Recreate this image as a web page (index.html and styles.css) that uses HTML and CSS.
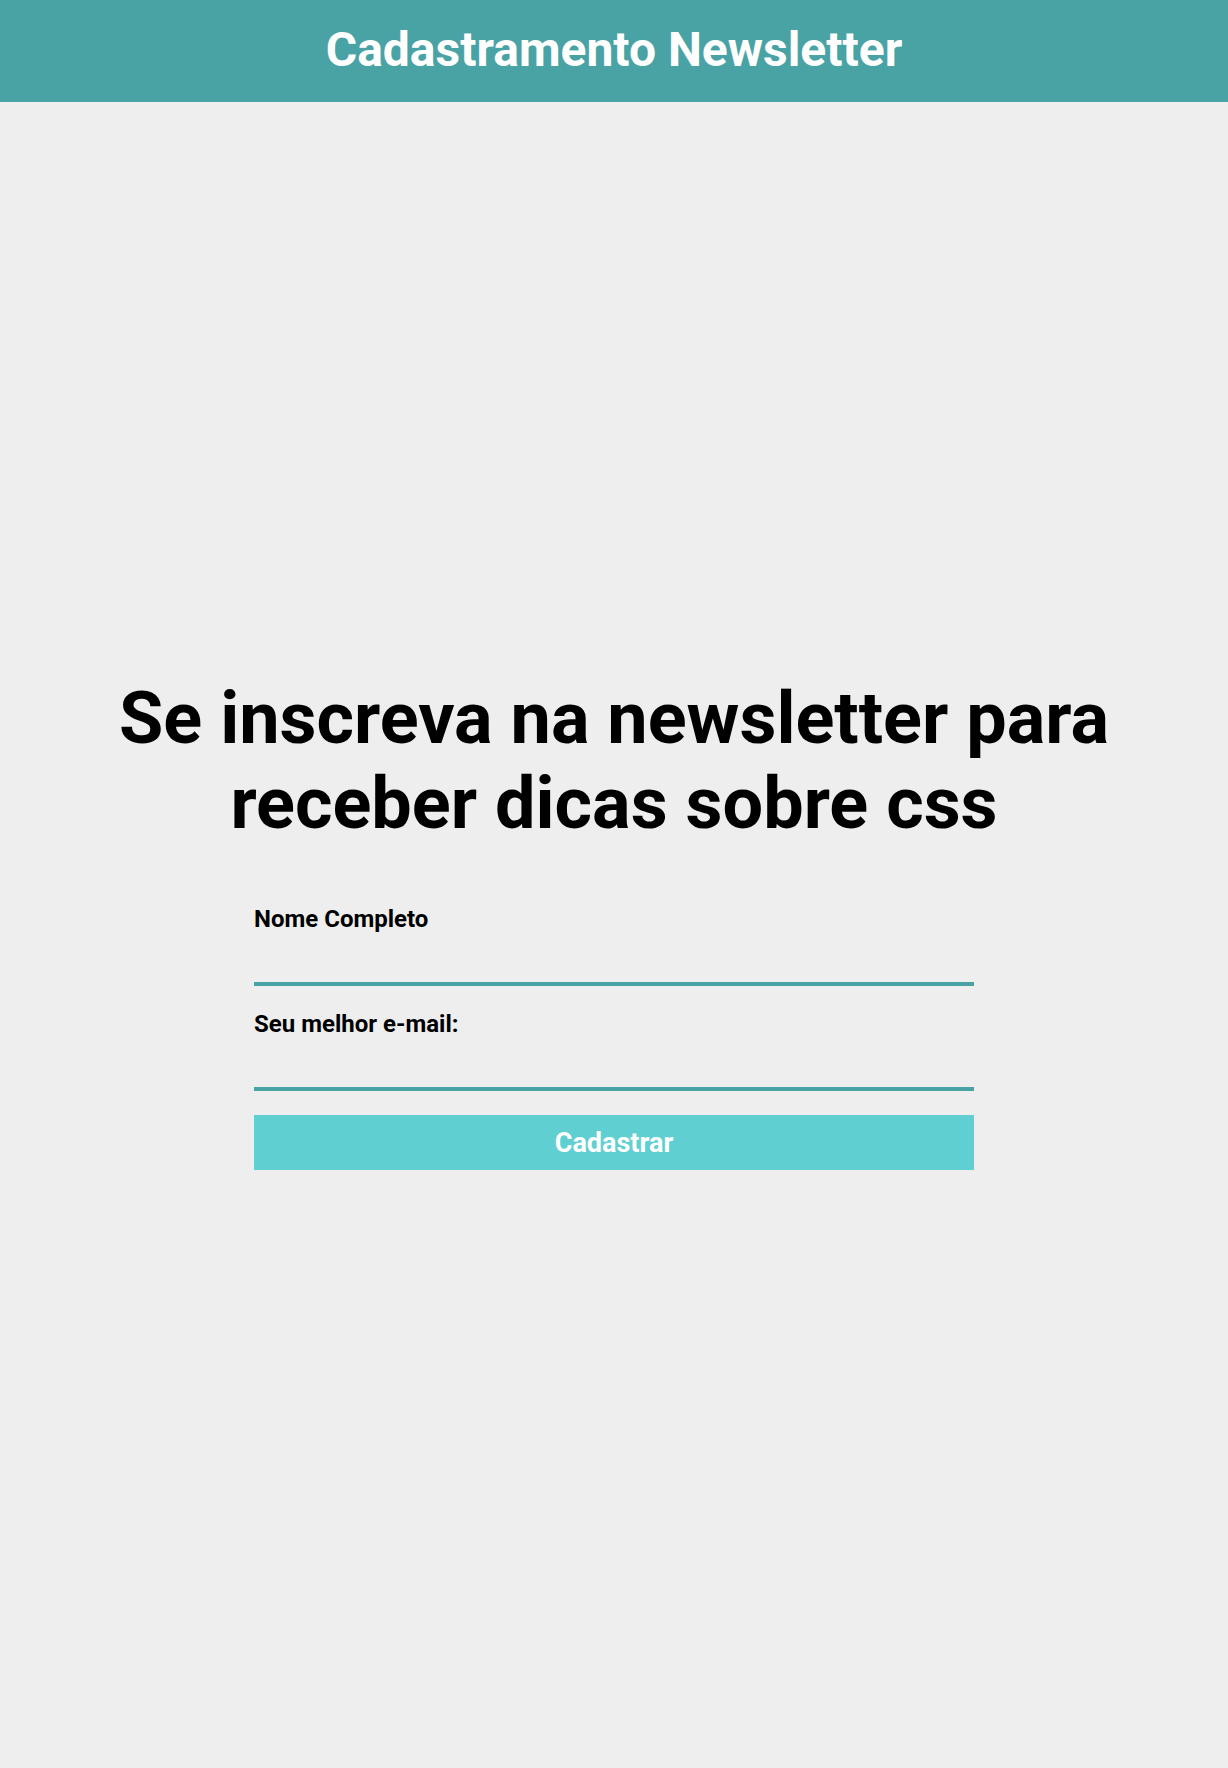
FILE: index.html
```html
<!DOCTYPE html>
<html lang="pt-BR">
<head>
<meta charset="UTF-8">
<title>Cadastramento Newsletter</title>
<link rel="stylesheet" href="styles.css">
</head>
<body>
<header class="topbar">
  <h1 class="topbar-title">Cadastramento Newsletter</h1>
</header>
<main class="content">
  <h2 class="headline">Se inscreva na newsletter para receber dicas sobre css</h2>
  <form class="signup">
    <div class="field">
      <label class="field-label" for="nome">Nome Completo</label>
      <input class="field-input" type="text" id="nome">
    </div>
    <div class="field">
      <label class="field-label" for="email">Seu melhor e-mail:</label>
      <input class="field-input" type="email" id="email">
    </div>
    <button class="submit" type="button">Cadastrar</button>
  </form>
</main>
</body>
</html>
```
FILE: styles.css
```css
* { box-sizing: border-box; }
html, body { margin: 0; padding: 0; }
body {
  background: #eeeeee;
  font-family: Roboto, "Liberation Sans", sans-serif;
  color: #000;
  min-height: 1768px;
}
.topbar {
  background: #49a3a4;
  height: 102px;
  padding-top: 21px;
  text-align: center;
}
.topbar-title {
  margin: 0;
  color: #fff;
  font-size: 48px;
  font-weight: 700;
  line-height: normal;
}
.content {
  padding-top: 574px;
  display: flex;
  flex-direction: column;
  align-items: center;
}
.headline {
  margin: 0;
  font-size: 72px;
  font-weight: 700;
  text-align: center;
  line-height: normal;
  max-width: 1000px;
}
.signup {
  width: 720px;
  margin-top: 59px;
  display: flex;
  flex-direction: column;
}
.field {
  display: flex;
  flex-direction: column;
  margin-bottom: 24px;
}
.field-label {
  font-size: 24px;
  font-weight: 700;
  line-height: normal;
}
.field-input {
  height: 53px;
  border: none;
  border-bottom: 4px solid #49a3a4;
  background: transparent;
  outline: none;
  font-family: inherit;
  font-size: 20px;
  padding: 0;
}
.submit {
  height: 55px;
  border: none;
  background: #5fcfd1;
  color: #fff;
  font-family: inherit;
  font-size: 27px;
  font-weight: 700;
  cursor: pointer;
}
```
